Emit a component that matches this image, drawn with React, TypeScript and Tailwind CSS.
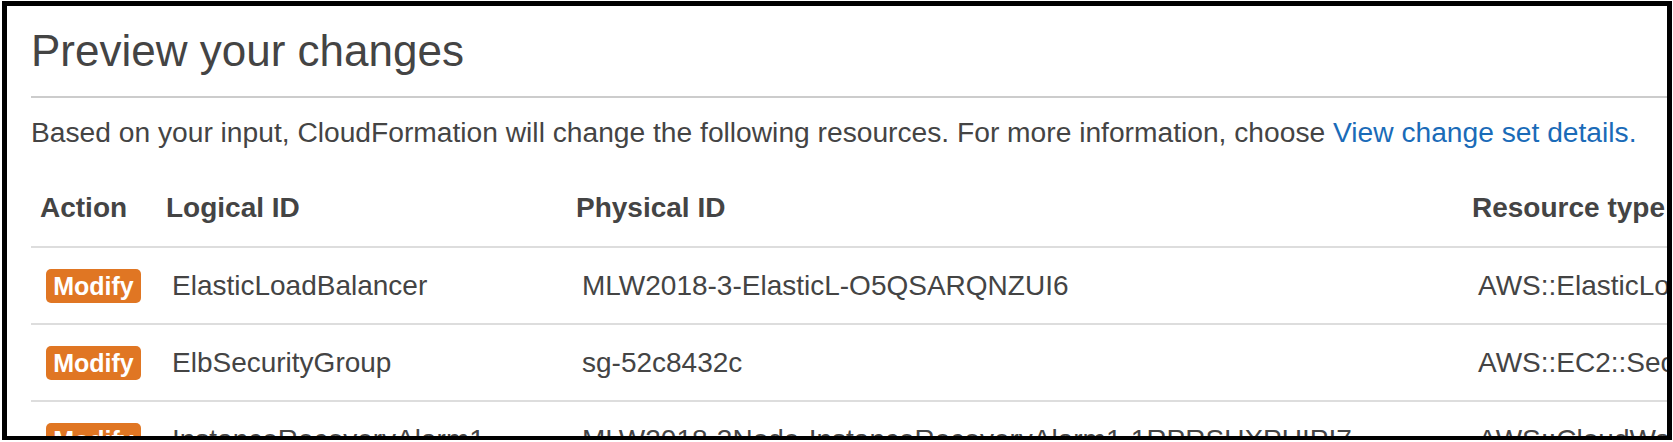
import React from "react";

const rows = [
  {
    logical: "ElasticLoadBalancer",
    physical: "MLW2018-3-ElasticL-O5QSARQNZUI6",
    type: "AWS::ElasticLoadBalancing::LoadBalancer",
  },
  {
    logical: "ElbSecurityGroup",
    physical: "sg-52c8432c",
    type: "AWS::EC2::SecurityGroup",
  },
  {
    logical: "InstanceRecoveryAlarm1",
    physical: "MLW2018-3Node-InstanceRecoveryAlarm1-1RPRSUXPUIPI7",
    type: "AWS::CloudWatch::Alarm",
  },
];

export default function App() {
  return (
    <div className="w-[1673px] h-[442px] bg-white pt-[1px] pl-[2px] font-['Liberation_Sans',Arial,sans-serif] text-[#444]">
      <div className="w-[1670px] h-[439px] border-[5px] border-b-4 border-black overflow-hidden bg-white">
        <div className="w-[2200px] pl-[24px] pt-[21px]">
          <h1 className="text-[44px] leading-[48px] font-normal text-[#444] whitespace-nowrap">
            Preview your changes
          </h1>
          <div className="mt-[21px] h-[2px] bg-[#ccc]" />
          <p className="mt-[14px] text-[28.2px] leading-[40px] whitespace-nowrap">
            Based on your input, CloudFormation will change the following resources. For more information, choose{" "}
            <span className="text-[#1a6bb8]">View change set details.</span>
          </p>
          <div className="mt-[18px]">
            <div className="flex h-[78px] items-center border-b-2 border-[#ddd] text-[28px] font-bold whitespace-nowrap">
              <div className="w-[126px] pl-[9px]">Action</div>
              <div className="w-[410px] pl-[9px]">Logical ID</div>
              <div className="w-[896px] pl-[9px]">Physical ID</div>
              <div className="flex-1 pl-[9px]">Resource type</div>
            </div>
            {rows.map((r) => (
              <div
                key={r.logical}
                className="flex h-[77px] items-center border-b-2 border-[#ddd] text-[28px] whitespace-nowrap"
              >
                <div className="w-[126px] pl-[15px]">
                  <span className="inline-flex h-[34px] w-[95px] items-center justify-center rounded-[5px] bg-[#e07623] text-[25px] font-bold text-white">
                    Modify
                  </span>
                </div>
                <div className="w-[410px] pl-[15px]">{r.logical}</div>
                <div className="w-[896px] pl-[15px]">{r.physical}</div>
                <div className="flex-1 pl-[15px]">{r.type}</div>
              </div>
            ))}
          </div>
        </div>
      </div>
    </div>
  );
}
